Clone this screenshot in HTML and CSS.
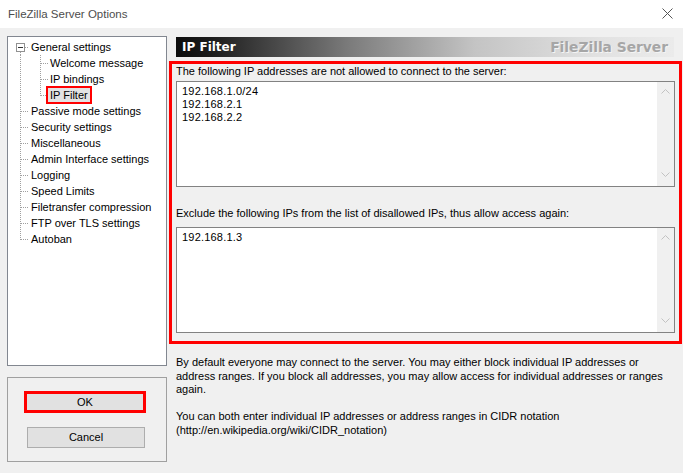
FILE: index.html
```html
<!DOCTYPE html>
<html>
<head>
  <title>FileZilla Server Options</title>
  <link rel="stylesheet" href="styles.css">
</head>
<body>
  <div class="window">
    <div class="titlebar">
      <span class="title">FileZilla Server Options</span>
      <svg class="close" width="11" height="11" viewBox="0 0 11 11">
        <path d="M0.5 0.5 L10.5 10.5 M10.5 0.5 L0.5 10.5" stroke="#555" stroke-width="1" fill="none"/>
      </svg>
    </div>

    <div class="dialog">
      <!-- left column: settings tree + ok/cancel -->
      <div class="side">
        <div class="tree">
          <div class="row">
            <span class="cell root"><span class="minus"></span></span>
            <span class="label">General settings</span>
          </div>
          <div class="row">
            <span class="cell pipe"></span><span class="cell tee"></span>
            <span class="label">Welcome message</span>
          </div>
          <div class="row">
            <span class="cell pipe"></span><span class="cell tee"></span>
            <span class="label">IP bindings</span>
          </div>
          <div class="row">
            <span class="cell pipe"></span><span class="cell ell"></span>
            <span class="label sel">IP Filter</span>
          </div>
          <div class="row"><span class="cell tee"></span><span class="label">Passive mode settings</span></div>
          <div class="row"><span class="cell tee"></span><span class="label">Security settings</span></div>
          <div class="row"><span class="cell tee"></span><span class="label">Miscellaneous</span></div>
          <div class="row"><span class="cell tee"></span><span class="label">Admin Interface settings</span></div>
          <div class="row"><span class="cell tee"></span><span class="label">Logging</span></div>
          <div class="row"><span class="cell tee"></span><span class="label">Speed Limits</span></div>
          <div class="row"><span class="cell tee"></span><span class="label">Filetransfer compression</span></div>
          <div class="row"><span class="cell tee"></span><span class="label">FTP over TLS settings</span></div>
          <div class="row"><span class="cell ell"></span><span class="label">Autoban</span></div>
        </div>

        <div class="buttons">
          <div class="btn btn-ok">OK</div>
          <div class="btn btn-cancel">Cancel</div>
        </div>
      </div>

      <!-- right column: the IP filter page -->
      <div class="page">
        <div class="page-head">
          <span class="page-title">IP Filter</span>
          <span class="brand">FileZilla Server</span>
        </div>

        <div class="marked">
          <div class="field-label first">The following IP addresses are not allowed to connect to the server:</div>
          <div class="editbox">
            <div class="edit-text">192.168.1.0/24<br>192.168.2.1<br>192.168.2.2</div>
            <div class="vscroll">
              <svg width="9" height="5" viewBox="0 0 9 5"><path d="M0.5 4.5 L4.5 0.5 L8.5 4.5" stroke="#c2c2c2" fill="none"/></svg>
              <svg width="9" height="5" viewBox="0 0 9 5"><path d="M0.5 0.5 L4.5 4.5 L8.5 0.5" stroke="#c2c2c2" fill="none"/></svg>
            </div>
          </div>

          <div class="field-label second">Exclude the following IPs from the list of disallowed IPs, thus allow access again:</div>
          <div class="editbox">
            <div class="edit-text">192.168.1.3</div>
            <div class="vscroll">
              <svg width="9" height="5" viewBox="0 0 9 5"><path d="M0.5 4.5 L4.5 0.5 L8.5 4.5" stroke="#c2c2c2" fill="none"/></svg>
              <svg width="9" height="5" viewBox="0 0 9 5"><path d="M0.5 0.5 L4.5 4.5 L8.5 0.5" stroke="#c2c2c2" fill="none"/></svg>
            </div>
          </div>
        </div>

        <div class="notes">
          <p>By default everyone may connect to the server. You may either block individual IP addresses or address ranges. If you block all addresses, you may allow access for individual addresses or ranges again.</p>
          <p>You can both enter individual IP addresses or address ranges in CIDR notation (http://en.wikipedia.org/wiki/CIDR_notation)</p>
        </div>
      </div>
    </div>
  </div>
</body>
</html>
```

FILE: styles.css
```css
html, body {
  margin: 0;
  padding: 0;
  background: #f0f0f0;
  font-family: "Liberation Sans", Arial, sans-serif;
  font-size: 11px;
  color: #000;
}

.window {
  width: 683px;
  height: 473px;
  overflow: hidden;
}

.titlebar {
  height: 28px;
  background: #fff;
  display: flex;
  align-items: center;
  justify-content: space-between;
  padding: 0 10px 0 8px;
}

.title {
  font-size: 11.5px;
  color: #4d4d4d;
}

.close {
  margin-top: -2px;
}

.dialog {
  display: flex;
  padding: 8px 0 0 7px;
}

/* ---- left column ---- */

.side {
  width: 160px;
  flex: none;
}

.tree {
  height: 330px;
  box-sizing: border-box;
  background: #fff;
  border: 1px solid #828790;
  padding-top: 2px;
}

.row {
  display: flex;
  height: 16px;
  line-height: 16px;
  white-space: nowrap;
}

.cell {
  width: 20px;
  height: 16px;
  flex: none;
}

/* dotted tree connectors */
.tee {
  background:
    repeating-linear-gradient(to bottom, #a0a0a0 0 1px, transparent 1px 2px) 12px 0 / 1px 16px no-repeat,
    repeating-linear-gradient(to right, #a0a0a0 0 1px, transparent 1px 2px) 13px 8px / 7px 1px no-repeat;
}

.ell {
  background:
    repeating-linear-gradient(to bottom, #a0a0a0 0 1px, transparent 1px 2px) 12px 0 / 1px 9px no-repeat,
    repeating-linear-gradient(to right, #a0a0a0 0 1px, transparent 1px 2px) 13px 8px / 7px 1px no-repeat;
}

.pipe {
  background: repeating-linear-gradient(to bottom, #a0a0a0 0 1px, transparent 1px 2px) 12px 0 / 1px 16px no-repeat;
}

.root {
  background:
    repeating-linear-gradient(to bottom, #a0a0a0 0 1px, transparent 1px 2px) 12px 13px / 1px 3px no-repeat,
    repeating-linear-gradient(to right, #a0a0a0 0 1px, transparent 1px 2px) 17px 8px / 3px 1px no-repeat;
}

.minus {
  display: block;
  width: 7px;
  height: 7px;
  margin: 4px 0 0 8px;
  border: 1px solid #919191;
  background: linear-gradient(#333, #333) center / 5px 1px no-repeat;
}

.label {
  padding-left: 2px;
}

/* top level items sit one pixel further right */
.cell:first-child + .label {
  padding-left: 3px;
}

.label.sel {
  height: 14px;
  line-height: 14px;
  margin-top: 1px;
  padding: 0 2px;
  background: #e3e3e3;
  box-shadow: 0 0 0 2px #f00;
}

.buttons {
  height: 85px;
  box-sizing: border-box;
  margin-top: 11px;
  border: 1px solid #a0a0a0;
}

.btn {
  background: #e1e1e1;
  text-align: center;
  box-sizing: border-box;
}

.btn-ok {
  width: 122px;
  height: 22px;
  line-height: 16px;
  margin: 13px 0 0 16px;
  border: 3px solid #f00;
}

.btn-cancel {
  width: 118px;
  height: 21px;
  line-height: 19px;
  margin: 14px 0 0 19px;
  border: 1px solid #adadad;
}

/* ---- right column ---- */

.page {
  width: 498px;
  margin-left: 9px;
  flex: none;
}

.page-head {
  height: 20px;
  margin-top: 1px;
  display: flex;
  align-items: center;
  justify-content: space-between;
  padding: 0 6px;
  background: linear-gradient(to right, #0c0c0c 0%, #1c1c1c 7%, #7c7c7c 35%, #c4c4c4 60%, #e2e2e2 85%, #ebebeb 100%);
  font-family: "DejaVu Sans", sans-serif;
  font-weight: bold;
}

.page-title {
  color: #fff;
  font-size: 12px;
}

.brand {
  color: #a6a6a6;
  font-size: 13.8px;
  text-shadow: 1px 1px 0 #f4f4f4;
}

.marked {
  margin: 4px -8px 0 -7px;
  border: 3px solid #f00;
  padding: 0 4px 8px 4px;
}

.field-label {
  line-height: 14px;
}

.field-label.first {
  height: 17px;
}

.field-label.second {
  padding-top: 19px;
  margin-bottom: 7px;
}

.editbox {
  height: 106px;
  box-sizing: border-box;
  border: 1px solid #828282;
  background: #fff;
  display: flex;
}

.edit-text {
  flex: 1;
  padding: 3px 0 0 5px;
  line-height: 13px;
  letter-spacing: 0.2px;
}

.vscroll {
  width: 17px;
  background: #f0f0f0;
  display: flex;
  flex-direction: column;
  justify-content: space-between;
  align-items: center;
  padding: 7px 0 9px;
}

.notes {
  margin-top: 12px;
  padding-right: 10px;
  line-height: 13.5px;
}

.notes p {
  margin: 0 0 13.5px 0;
}
```
